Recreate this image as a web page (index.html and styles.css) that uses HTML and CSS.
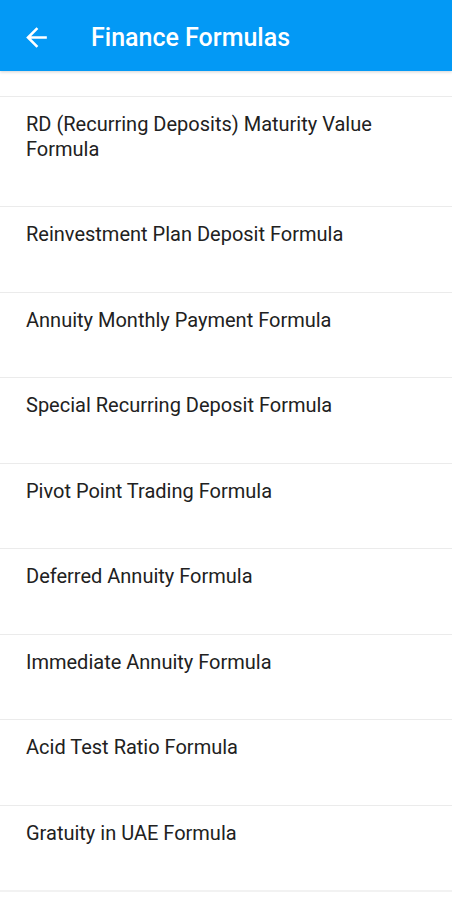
FILE: index.html
```html
<!doctype html>
<html lang="en">
    <head>
        <meta charset="UTF-8" />
        <meta name="viewport" content="width=device-width, initial-scale=1.0" />
        <title>Finance Formulas</title>
        <link rel="stylesheet" href="styles.css">
    </head>
    <body>
        <header class="app-bar">
            <svg class="back-icon" viewBox="0 0 24 24" width="24" height="24">
                <path d="M20 11H7.83l5.59-5.59L12 4l-8 8 8 8 1.41-1.41L7.83 13H20v-2z" fill="#fff" />
            </svg>
            <h1 class="app-title">Finance Formulas</h1>
        </header>

        <ul class="formula-list">
            <li class="formula-item clipped"></li>
            <li class="formula-item">RD (Recurring Deposits) Maturity Value Formula</li>
            <li class="formula-item">Reinvestment Plan Deposit Formula</li>
            <li class="formula-item">Annuity Monthly Payment Formula</li>
            <li class="formula-item">Special Recurring Deposit Formula</li>
            <li class="formula-item">Pivot Point Trading Formula</li>
            <li class="formula-item">Deferred Annuity Formula</li>
            <li class="formula-item">Immediate Annuity Formula</li>
            <li class="formula-item">Acid Test Ratio Formula</li>
            <li class="formula-item">Gratuity in UAE Formula</li>
        </ul>
    </body>
</html>
```

FILE: styles.css
```css
body {
    font-family: Roboto, "Liberation Sans", sans-serif;
    margin: 0;
    padding: 0;
    background-color: #fff;
    height: 900px;
    overflow: hidden;
}

.app-bar {
    position: relative;
    z-index: 1;
    display: flex;
    align-items: center;
    height: 71px;
    padding-top: 3px;
    box-sizing: border-box;
    background-color: #0399f5;
    box-shadow: 0 1px 3px rgba(0, 0, 0, 0.18);
}

.back-icon {
    margin-left: 21px;
    width: 31px;
    height: 31px;
}

.app-title {
    margin: 0 0 0 39px;
    color: #fff;
    font-size: 25px;
    font-weight: 500;
}

.formula-list {
    list-style: none;
    margin: 0;
    padding: 0;
}

.formula-item {
    padding: 15px 24px 45px 26px;
    font-size: 20px;
    line-height: 24.5px;
    color: #212121;
    border-bottom: 1px solid #ebebeb;
}

.formula-item.clipped {
    height: 25px;
    padding: 0;
}

.formula-item:last-child {
    border-bottom: 2px solid #f2f2f2;
}
```
